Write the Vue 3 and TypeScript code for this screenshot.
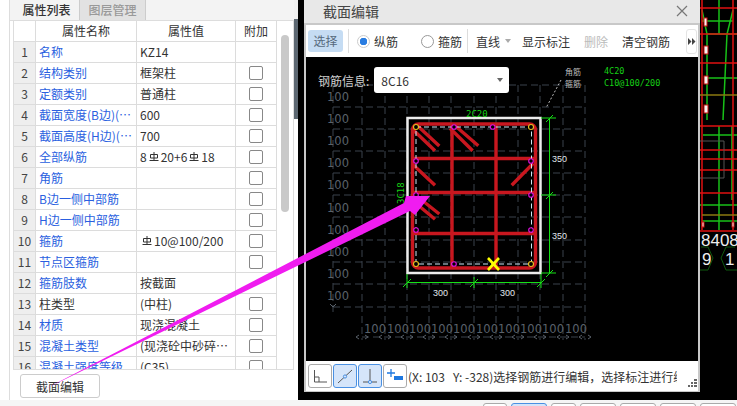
<template>
  <div class="page">
    <div class="props">
      <div class="edge"></div>
      <div class="props-main">
        <div class="tabs">
          <div class="tab active">属性列表</div>
          <div class="tab">图层管理</div>
        </div>
        <div class="table-wrap">
          <div class="table">
            <div class="row head">
              <div class="c idx"></div>
              <div class="c name">属性名称</div>
              <div class="c val">属性值</div>
              <div class="c add">附加</div>
            </div>
            <div v-for="(r, i) in rows" :key="i" class="row">
              <div class="c idx">{{ i + 1 }}</div>
              <div class="c name" :class="{ plain: r.plain }"><span class="clip">{{ r.name }}</span></div>
              <div class="c val">
                <span v-if="r.parts" class="clip">
                  <template v-for="(p, k) in r.parts" :key="k">
                    <svg v-if="p === '#'" class="grade" width="10" height="10" viewBox="0 0 10 10">
                      <path d="M1.5 2.5h7v3.5h-7zM5 0v8M0.5 8.5h9" fill="none" stroke="#333" stroke-width="1" />
                    </svg>
                    <span v-else>{{ p }}</span>
                  </template>
                </span>
                <span v-else class="clip">{{ r.value }}</span>
              </div>
              <div class="c add"><i v-if="!r.nocheck" class="check"></i></div>
            </div>
          </div>
          <div class="scroll"><div class="thumb"></div></div>
        </div>
        <div class="foot"><button class="edit-btn">截面编辑</button></div>
      </div>
      <div class="handle"><div class="grip"></div></div>
    </div>

    <div class="stage">
      <div class="work">
        <div class="dialog">
          <div class="title">
            <span>截面编辑</span>
            <svg width="12" height="12" viewBox="0 0 12 12"><path d="M1 1l10 10M11 1L1 11" stroke="#777" stroke-width="1.2" /></svg>
          </div>
          <div class="tools">
            <div class="t-btn on">选择</div>
            <div class="sep"></div>
            <label class="radio first"><i class="dot checked"></i>纵筋</label>
            <label class="radio second"><i class="dot"></i>箍筋</label>
            <div class="sep"></div>
            <div class="line-sel">直线<i class="caret small"></i></div>
            <div class="t-text">显示标注</div>
            <div class="t-text off">删除</div>
            <div class="t-text">清空钢筋</div>
            <div class="more">
              <svg width="8" height="7" viewBox="0 0 8 7"><path d="M0 0l3.5 3.5L0 7zM4 0l3.5 3.5L4 7z" fill="#444" /></svg>
            </div>
          </div>
          <div class="canvas">
            <svg class="drawing" width="392" height="304" viewBox="306 57 392 304">
              <g stroke="#3a424c" stroke-dasharray="7 4" fill="none">
                <path v-for="x in gridX" :key="'v' + x" :d="`M${x} 85V340`" />
                <path v-for="y in gridY" :key="'h' + y" :d="`M333 ${y}H585`" />
                <path d="M333 85V312" />
                <path d="M362 337H585" />
              </g>
              <g stroke="#5a626b" fill="none">
                <path d="M330 304l3 3 3-3" />
                <path v-for="x in gridX" :key="'a' + x" :d="`M${x - 3} 335l-3 2 3 2M${x + 3} 335l3 2-3 2`" />
              </g>
              <g class="cad-num">
                <text v-for="y in labelY" :key="'l' + y" x="327" :y="y + 5">100</text>
                <text v-for="x in gridX.slice(0, 10)" :key="'b' + x" :x="x + 2" y="333">100</text>
              </g>

              <rect x="407.5" y="118" width="133" height="155" fill="none" stroke="#ececec" stroke-width="2.5" />
              <g stroke="#c8171f" stroke-width="3.4" fill="none">
                <rect x="412.5" y="124" width="123" height="144" rx="6" />
                <path d="M452 124V268M496 124V268M413 158.500H535M413 192.500H535M413 233.500H535" />
                <path d="M416.700 125L439.300 146M413.300 130L435 150.700M454.300 125L478.300 145.700M450 128.300L472.700 150.700" />
                <path d="M413.300 165L435 185.300M533.300 163.300L511.700 185.300M421.700 200L439.300 214M420 206.700L435 219.300" />
              </g>
              <rect x="416" y="127" width="115.5" height="137" fill="none" stroke="#cfe6f5" stroke-dasharray="5 3" />
              <g fill="#000" stroke="#e010e0" stroke-width="1.1">
                <circle v-for="p in pins" :key="p[0] + '-' + p[1]" :cx="p[0]" :cy="p[1]" r="2.300" />
              </g>
              <g fill="#000" stroke="#e8c020" stroke-width="1.1">
                <circle cx="416" cy="127" r="2.500" />
                <circle cx="531" cy="127" r="2.500" />
                <circle cx="416" cy="264" r="2.500" />
                <circle cx="531" cy="264" r="2.500" />
              </g>
              <path d="M488 258l11 12M499 258l-11 12" stroke="#ffff00" stroke-width="2.600" />

              <g stroke="#16e016" fill="none">
                <path d="M549.500 118V273M541 118H556M541 195H556M541 273H556" />
                <path d="M407 282.500H541M407 274V288M474 277V288M541 274V288" />
                <path d="M403 287l8-8M470 287l8-8M537 287l8-8M546 122l7-7M546 199l7-7M546 277l7-7" />
              </g>
              <g class="cad-green">
                <text x="466" y="117">2C20</text>
                <text x="0" y="0" transform="translate(404 204) rotate(-90)">3C18</text>
                <text x="604" y="74" class="note">4C20</text>
                <text x="604" y="86" class="note">C10@100/200</text>
              </g>
              <g class="cad-white">
                <text x="433" y="296">300</text>
                <text x="500" y="296">300</text>
                <text x="552" y="162">350</text>
                <text x="552" y="239">350</text>
                <text x="565" y="75" class="mini">角筋</text>
                <text x="565" y="87" class="mini">箍筋</text>
              </g>
              <path d="M561 80L546 108" stroke="#bbb" stroke-dasharray="2 2" fill="none" />
            </svg>
            <div class="rebar">
              <span>钢筋信息:</span>
              <div class="select">8C16<i class="caret"></i></div>
            </div>
          </div>
          <div class="status">
            <div class="s-btn">
              <svg width="16" height="16" viewBox="0 0 16 16"><path d="M2.500 2v12H15M2 9h5v5" fill="none" stroke="#555" /></svg>
            </div>
            <div class="s-btn active">
              <svg width="16" height="16" viewBox="0 0 16 16"><path d="M1 15L15 2" stroke="#555" /><circle cx="8" cy="8.500" r="1.600" fill="#d5e5fa" stroke="#4a90e2" /></svg>
            </div>
            <div class="s-btn active">
              <svg width="16" height="16" viewBox="0 0 16 16"><path d="M8 1v13M1 14h14" stroke="#555" fill="none" /><circle cx="8" cy="14" r="1.600" fill="#d5e5fa" stroke="#4a90e2" /></svg>
            </div>
            <div class="s-btn">
              <svg width="18" height="16" viewBox="0 0 18 16"><path d="M5 1v8M1 5h8" stroke="#1e78e0" stroke-width="1.300" /><rect x="8" y="8" width="9" height="4" fill="#1e78e0" /></svg>
            </div>
            <div class="s-msg">(X: 103&nbsp;&nbsp;&nbsp;Y: -328)选择钢筋进行编辑，选择标注进行编辑</div>
            <svg class="resize" width="9" height="9" viewBox="0 0 9 9">
              <path d="M6 0h3v2H6zM3 3h2v2H3zM6 3h3v2H6zM0 6h2v2H0zM3 6h2v2H3zM6 6h3v2H6z" fill="#666" />
            </svg>
          </div>
        </div>
        <svg class="model" width="37" height="400" viewBox="700 0 37 400">
          <g stroke="#18c018" fill="none" stroke-width="1.500">
            <path d="M702 10L707 34V120M733 10L727 34L723 120M719 0V34M702 21H733M707 34H737M707 78H737" />
            <path d="M703 135H737M732 126V200M719 126V200M700 205H737M719 200V230M702 221H737" />
          </g>
          <g stroke="#e01010" fill="none" stroke-width="1.500">
            <path d="M702 0V230M733 0V230M700 8H737M700 34H737M700 63H737M700 126H737M700 150H737M700 159H737M700 170H737M700 193H737M700 231H737" />
          </g>
          <path d="M700 95H737M702 215H737" stroke="#8a7a10" stroke-width="1.500" />
          <path d="M700 141H724V178H700" stroke="#555" fill="none" />
          <g fill="#f4f4f4" stroke="#d01010" stroke-width="1">
            <rect x="704" y="18" width="3" height="8" />
            <rect x="704" y="46" width="4" height="8" />
            <rect x="704" y="76" width="4" height="8" />
            <rect x="704" y="105" width="4" height="8" />
            <rect x="702" y="222" width="2" height="5" />
            <rect x="732" y="222" width="2" height="5" />
          </g>
          <g fill="none" stroke="#0e5a0e">
            <path d="M701 247h7l5 11-5 12h-8M735 247h-9l-5 11 5 12h11" />
          </g>
          <g class="model-text">
            <text x="701" y="246">8408</text>
            <text x="702" y="265">9</text>
            <text x="725" y="265">1</text>
          </g>
        </svg>
      </div>
      <div class="bottom">
        <span v-for="(w, i) in pager" :key="i" class="pg" :class="{ cur: i === 1 }" :style="{ width: w + 'px' }"></span>
      </div>
    </div>

    <svg class="arrow" width="737" height="406" viewBox="0 0 737 406">
      <path d="M45 389L404 203L406 196H430L415 215L410 211Z" fill="#f01cf0" />
    </svg>
  </div>
</template>

<script setup lang="ts">
interface Row {
  name: string
  value?: string
  parts?: string[]
  nocheck?: boolean
  plain?: boolean
}

const rows: Row[] = [
  { name: '名称', value: 'KZ14', nocheck: true },
  { name: '结构类别', value: '框架柱' },
  { name: '定额类别', value: '普通柱' },
  { name: '截面宽度(B边)(mm)', value: '600' },
  { name: '截面高度(H边)(mm)', value: '700' },
  { name: '全部纵筋', parts: ['8', '#', '20+6', '#', '18'] },
  { name: '角筋' },
  { name: 'B边一侧中部筋' },
  { name: 'H边一侧中部筋' },
  { name: '箍筋', parts: ['#', '10@100/200'] },
  { name: '节点区箍筋' },
  { name: '箍筋肢数', value: '按截面', nocheck: true },
  { name: '柱类型', value: '(中柱)', plain: true },
  { name: '材质', value: '现浇混凝土' },
  { name: '混凝土类型', value: '(现浇砼中砂碎石坍落度)' },
  { name: '混凝土强度等级', value: '(C35)' }
]

const gridX = [362, 385, 407, 429, 451, 474, 496, 518, 540, 563, 585]
const gridY = [85, 107, 129, 151, 173, 195, 217, 240, 262, 284, 307]
const labelY = [96, 118, 140, 162, 184, 207, 229, 251, 273, 295]
const pins = [
  [454, 127], [492.7, 127], [416, 161], [531, 161], [416, 195],
  [531, 195], [416, 230], [531, 230], [454, 264]
]
const pager = [24, 36, 25, 36, 36, 36, 36]
</script>

<style>
html, body { margin: 0; padding: 0; background: #f5f5f5; overflow: hidden; }
</style>

<style scoped>
.page {
  position: relative;
  display: flex;
  width: 737px;
  height: 406px;
  overflow: hidden;
  background: #f5f5f5;
  font-family: "Noto Sans CJK SC", "Noto Sans", sans-serif;
  font-size: 12px;
  color: #333;
}

.props { display: flex; width: 298px; height: 400px; background: #fff; flex: none; }
.edge { width: 9px; border-right: 1px solid #ddd; }
.props-main { display: flex; flex-direction: column; width: 284px; padding-left: 4px; box-sizing: border-box; }
.tabs { display: flex; height: 20px; background: #f3f3f3; margin-left: -4px; padding-left: 4px; border-bottom: 1px solid #ddd; flex: none; }
.tab { width: 65px; line-height: 20px; text-align: center; background: #e2e2e2; color: #999; border-right: 1px solid #ccc; font-weight: 500; }
.tab.active { background: #f3f3f3; color: #333; }
.table-wrap { display: flex; height: 348px; overflow: hidden; border-bottom: 1px solid #ddd; border-right: 1px solid #ddd; border-left: 1px solid #ddd; margin-left: -1px; flex: none; }
.table { width: 263px; flex: none; }
.row { display: flex; height: 21px; box-sizing: border-box; border-bottom: 1px solid #dcdcdc; }
.c { box-sizing: border-box; line-height: 20px; border-right: 1px solid #dcdcdc; height: 20px; white-space: nowrap; overflow: hidden; }
.idx { width: 22px; text-align: center; background: #eeeeee; color: #444; flex: none; }
.name { width: 101px; padding: 0 3px; color: #2a5fe0; flex: none; }
.name.plain { color: #333; }
.val { width: 99px; padding: 0 3px; flex: none; }
.add { width: 41px; display: flex; align-items: center; justify-content: center; flex: none; }
.head .c { text-align: center; background: #fff; color: #333; }
.clip { display: block; overflow: hidden; text-overflow: ellipsis; }
.grade { margin: 0 2px 3px; vertical-align: middle; }
.check { display: block; width: 12px; height: 12px; border: 1px solid #888; border-radius: 2px; background: #fff; }
.scroll { flex: 1; padding: 14px 3px 0 4px; }
.thumb { width: 8px; height: 177px; background: #c9c9c9; border-radius: 4px; }
.foot { padding: 4px 0 0 6px; }
.edit-btn {
  display: block;
  width: 80px;
  height: 24px;
  padding: 0;
  background: #fff;
  border: 1px solid #ccc;
  border-radius: 3px;
  font: inherit;
  color: #333;
}
.handle { width: 4px; height: 119px; background: #f0f0f0; flex: none; }
.grip { margin-top: 19px; height: 100px; background: #5d6872; }

.stage { display: flex; flex-direction: column; width: 439px; height: 406px; flex: none; }
.work { display: flex; height: 400px; background: #000; padding-left: 6px; box-sizing: border-box; flex: none; }
.dialog { display: flex; flex-direction: column; width: 396px; height: 392px; background: #c8c8c8; padding: 0 2px 2px; box-sizing: border-box; flex: none; }
.title {
  display: flex;
  align-items: center;
  justify-content: space-between;
  height: 23px;
  margin: 0 -2px;
  padding: 0 12px 2px 19px;
  box-sizing: border-box;
  background: #e8e8e8;
  font-size: 14px;
  color: #444;
  flex: none;
}
.tools {
  display: flex;
  align-items: center;
  height: 32px;
  margin-top: 2px;
  padding-left: 2px;
  background: #fff;
  color: #333;
  flex: none;
}
.tools > * { flex: none; }
.t-btn { width: 35px; height: 22px; line-height: 22px; text-align: center; border-radius: 3px; }
.t-btn.on { background: #c5dcf3; color: #566a7c; }
.sep { width: 1px; height: 24px; background: #ddd; margin: 0 5px; }
.radio { display: flex; align-items: center; gap: 4px; }
.radio.first { margin-left: 3px; width: 64px; }
.radio.second { width: 41px; }
.dot { width: 11px; height: 11px; border: 1px solid #999; border-radius: 50%; background: #fff; display: block; flex: none; }
.dot.checked { border-color: #ccc; background: radial-gradient(circle, #2a7de1 0 3.5px, #fff 4px); }
.line-sel { display: flex; align-items: center; gap: 5px; margin-left: 1px; width: 47px; padding-left: 2px; box-sizing: border-box; }
.t-text { margin-right: 14px; white-space: nowrap; }
.t-text.off { color: #bbb; }
.line-sel + .t-text { margin-left: 1px; }
.more {
  display: flex;
  align-items: center;
  justify-content: center;
  width: 11px;
  height: 25px;
  margin-left: 2px;
  box-sizing: border-box;
  border: 1px solid #e4e4e4;
  border-radius: 3px;
}
.caret { display: block; width: 0; height: 0; border: 3px solid transparent; border-top: 4px solid #666; border-bottom: 0; }
.caret.small { border-top-color: #aaa; }
.canvas { position: relative; height: 304px; background: #000; flex: none; }
.drawing { position: absolute; left: 0; top: 0; display: block; }
.rebar { position: relative; display: flex; align-items: center; gap: 5px; padding: 10px 0 0 12px; color: #cfcfcf; }
.select {
  display: flex;
  align-items: center;
  justify-content: space-between;
  width: 135px;
  height: 26px;
  padding: 0 6px 0 7px;
  box-sizing: border-box;
  background: #fff;
  border-radius: 3px;
  color: #333;
}
.cad-num text { fill: #5a626b; font-family: "DejaVu Sans", sans-serif; font-size: 11.500px; }
.cad-green text { fill: #16d016; font-family: "DejaVu Sans Mono", monospace; font-size: 9px; }
.cad-green text.note { font-size: 8.500px; }
.cad-white text { fill: #e0e8ee; font-family: "Liberation Sans", sans-serif; font-size: 9px; }
.cad-white text.mini { font-family: "Noto Sans CJK SC", sans-serif; font-size: 8px; fill: #bbb; }
.status { position: relative; display: flex; align-items: center; gap: 1px; height: 30px; padding-left: 2px; background: #fff; flex: none; }
.s-btn {
  display: flex;
  align-items: center;
  justify-content: center;
  width: 24px;
  height: 24px;
  box-sizing: border-box;
  border: 1px solid #aaa;
  border-radius: 3px;
  background: #fff;
  flex: none;
}
.s-btn.active { background: #d5e5fa; border-color: #4a90e2; }
.s-msg { width: 269px; white-space: nowrap; overflow: hidden; color: #333; }
.resize { position: absolute; right: 1px; bottom: 3px; }
.model { display: block; flex: none; margin-left: 0; }
.model-text text { fill: #eee; font-family: "Liberation Sans", sans-serif; font-size: 17px; }
.bottom { display: flex; gap: 4px; padding: 3px 0 0 185px; height: 6px; overflow: hidden; flex: none; }
.pg { display: block; height: 20px; flex: none; background: #fff; border: 1px solid #aaa; border-radius: 3px; box-sizing: border-box; }
.pg.cur { background: #d5e5fa; border-color: #4a90e2; }
.arrow { position: absolute; left: 0; top: 0; pointer-events: none; }
</style>
